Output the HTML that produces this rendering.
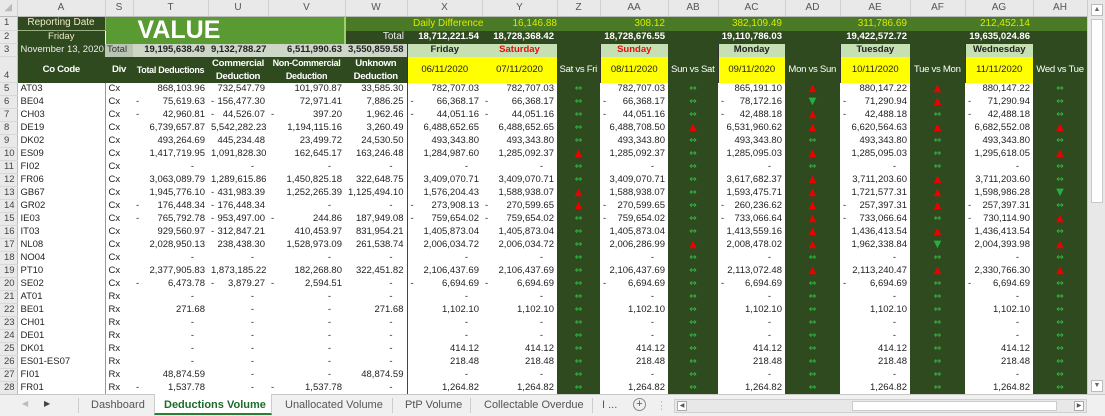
<!DOCTYPE html>
<html><head><meta charset="utf-8">
<style>
*{margin:0;padding:0;box-sizing:border-box}
body{width:1105px;height:416px;overflow:hidden;background:#fff;font-family:"Liberation Sans",sans-serif;position:relative}
table{position:absolute;left:0;top:0;border-collapse:collapse;table-layout:fixed;width:1087px}
td{font-size:9.5px;color:#222;white-space:nowrap;overflow:hidden;text-align:right;padding:0 3px;height:13px;line-height:12px}
tr.h td{height:16px;background:#e9e9e9;color:#555;text-align:center;font-size:10px;border-right:1px solid #d0d0d0;border-bottom:1px solid #bbb}
td.r{background:#e9e9e9;color:#444;text-align:left;padding-left:4px;border-right:1px solid #bbb;border-bottom:1px solid #d8d8d8;font-size:9.5px}
td.l{text-align:left}
td.sa{border-right:1px solid #999}
td.sw{border-right:1px solid #444}
td.g{background:#2f4a1e;color:#fff}
td.hd{font-size:9.6px;letter-spacing:-0.3px;padding:0 1px}
td.hs{font-size:9px}
td.a{background:#2f4a1e;text-align:center;font-family:"DejaVu Sans",sans-serif;font-size:10px;line-height:12px}
td.e{color:#35c24a;font-size:9px}
td.u{color:#ee0000}
td.d{color:#22b040}
td b{float:left;font-weight:normal;padding-left:0}
td.z{padding-right:14px}
.y{color:#d6ec00}
</style></head><body>
<table>
<colgroup><col style="width:17px"><col style="width:88px"><col style="width:28px"><col style="width:75px"><col style="width:60px"><col style="width:77px"><col style="width:62px"><col style="width:75px"><col style="width:75px"><col style="width:43px"><col style="width:68px"><col style="width:50px"><col style="width:67px"><col style="width:55px"><col style="width:70px"><col style="width:55px"><col style="width:68px"><col style="width:54px"></colgroup>
<tr class="h"><td style="color:#bbb">◢</td><td>A</td><td>S</td><td>T</td><td>U</td><td>V</td><td>W</td><td>X</td><td>Y</td><td>Z</td><td>AA</td><td>AB</td><td>AC</td><td>AD</td><td>AE</td><td>AF</td><td>AG</td><td>AH</td></tr>
<tr style="height:14px"><td class="r">1</td>
<td style="background:#2f4a1e;color:#eee8c8;text-align:center;border:1px solid #9ab080;font-size:10px">Reporting Date</td>
<td colspan="4" rowspan="2" style="background:#5a9a32;color:#fff;font-size:25px;font-weight:bold;text-align:left;padding-left:32px;line-height:26px;border-right:2px solid #9ed070">VALUE</td>
<td style="background:#4a7a25"></td>
<td colspan="11" style="background:#4a7a25;padding:0;position:relative"><div style="position:relative;height:14px;font-size:10px;color:#d6ec00;line-height:14px">
<span style="position:absolute;left:6px">Daily Difference</span>
<span style="position:absolute;right:530px">16,146.88</span>
<span style="position:absolute;right:422px">308.12</span>
<span style="position:absolute;right:305px">382,109.49</span>
<span style="position:absolute;right:180px">311,786.69</span>
<span style="position:absolute;right:57px">212,452.14</span></div></td></tr>
<tr style="height:13px"><td class="r">2</td><td class="g" style="text-align:center;color:#eee8c8">Friday</td>
<td class="g" style="font-size:10px;color:#eee">Total</td>
<td class="g" style="font-weight:bold">18,712,221.54</td><td class="g" style="font-weight:bold">18,728,368.42</td><td class="g"></td><td class="g" style="font-weight:bold">18,728,676.55</td><td class="g"></td><td class="g" style="font-weight:bold">19,110,786.03</td><td class="g"></td><td class="g" style="font-weight:bold">19,422,572.72</td><td class="g"></td><td class="g" style="font-weight:bold">19,635,024.86</td><td class="g"></td></tr>
<tr style="height:13px"><td class="r">3</td><td class="g" style="text-align:center;color:#eee">November 13, 2020</td>
<td style="background:#b9c4b3;text-align:left;color:#333;padding-left:2px">Total</td>
<td style="background:#cdd6c7;font-weight:bold">19,195,638.49</td><td style="background:#cdd6c7;font-weight:bold">9,132,788.27</td><td style="background:#cdd6c7;font-weight:bold">6,511,990.63</td><td style="background:#cdd6c7;font-weight:bold">3,550,859.58</td>
<td style="background:#c6e0b4;text-align:center;font-weight:bold;border-left:1px solid #333">Friday</td><td style="background:#c6e0b4;text-align:center;font-weight:bold;color:#e01010">Saturday</td><td class="g"></td>
<td style="background:#c6e0b4;text-align:center;font-weight:bold;color:#e01010;border-left:1px solid #333">Sunday</td><td class="g"></td>
<td style="background:#c6e0b4;text-align:center;font-weight:bold;border-left:1px solid #333">Monday</td><td class="g"></td>
<td style="background:#c6e0b4;text-align:center;font-weight:bold;border-left:1px solid #333">Tuesday</td><td class="g"></td>
<td style="background:#c6e0b4;text-align:center;font-weight:bold;border-left:1px solid #333">Wednesday</td><td class="g"></td></tr>
<tr style="height:26px"><td class="r" style="vertical-align:bottom">4</td>
<td class="g hd" style="text-align:center;font-weight:bold;height:26px">Co Code</td>
<td class="g hd" style="text-align:center;font-weight:bold">Div</td>
<td class="g hd hs" style="text-align:center;font-weight:bold">Total Deductions</td>
<td class="g hd" style="text-align:center;font-weight:bold;line-height:13px">Commercial<br>Deduction</td>
<td class="g hd hs" style="text-align:center;font-weight:bold;line-height:13px">Non-Commercial<br>Deduction</td>
<td class="g hd" style="text-align:center;font-weight:bold;line-height:13px">Unknown<br>Deduction</td>
<td style="background:#ffff00;text-align:center;border-left:1px solid #333">06/11/2020</td><td style="background:#ffff00;text-align:center">07/11/2020</td><td class="g y hd" style="text-align:center">Sat vs Fri</td>
<td style="background:#ffff00;text-align:center;border-left:1px solid #333">08/11/2020</td><td class="g y hd" style="text-align:center">Sun vs Sat</td>
<td style="background:#ffff00;text-align:center;border-left:1px solid #333">09/11/2020</td><td class="g y hd" style="text-align:center">Mon vs Sun</td>
<td style="background:#ffff00;text-align:center;border-left:1px solid #333">10/11/2020</td><td class="g y hd" style="text-align:center">Tue vs Mon</td>
<td style="background:#ffff00;text-align:center;border-left:1px solid #333">11/11/2020</td><td class="g y hd" style="text-align:center">Wed vs Tue</td></tr>

<tr><td class="r">5</td><td class="l sa">AT03</td><td class="l">Cx</td><td>868,103.96</td><td>732,547.79</td><td>101,970.87</td><td class="sw">33,585.30</td><td>782,707.03</td><td>782,707.03</td><td class="a e">⇔</td><td>782,707.03</td><td class="a e">⇔</td><td>865,191.10</td><td class="a u">▲</td><td>880,147.22</td><td class="a u">▲</td><td>880,147.22</td><td class="a e">⇔</td></tr>
<tr><td class="r">6</td><td class="l sa">BE04</td><td class="l">Cx</td><td><b>-</b>75,619.63</td><td><b>-</b>156,477.30</td><td>72,971.41</td><td class="sw">7,886.25</td><td><b>-</b>66,368.17</td><td><b>-</b>66,368.17</td><td class="a e">⇔</td><td><b>-</b>66,368.17</td><td class="a e">⇔</td><td><b>-</b>78,172.16</td><td class="a d">▼</td><td><b>-</b>71,290.94</td><td class="a u">▲</td><td><b>-</b>71,290.94</td><td class="a e">⇔</td></tr>
<tr><td class="r">7</td><td class="l sa">CH03</td><td class="l">Cx</td><td><b>-</b>42,960.81</td><td><b>-</b>44,526.07</td><td><b>-</b>397.20</td><td class="sw">1,962.46</td><td><b>-</b>44,051.16</td><td><b>-</b>44,051.16</td><td class="a e">⇔</td><td><b>-</b>44,051.16</td><td class="a e">⇔</td><td><b>-</b>42,488.18</td><td class="a u">▲</td><td><b>-</b>42,488.18</td><td class="a e">⇔</td><td><b>-</b>42,488.18</td><td class="a e">⇔</td></tr>
<tr><td class="r">8</td><td class="l sa">DE19</td><td class="l">Cx</td><td>6,739,657.87</td><td>5,542,282.23</td><td>1,194,115.16</td><td class="sw">3,260.49</td><td>6,488,652.65</td><td>6,488,652.65</td><td class="a e">⇔</td><td>6,488,708.50</td><td class="a u">▲</td><td>6,531,960.62</td><td class="a u">▲</td><td>6,620,564.63</td><td class="a u">▲</td><td>6,682,552.08</td><td class="a u">▲</td></tr>
<tr><td class="r">9</td><td class="l sa">DK02</td><td class="l">Cx</td><td>493,264.69</td><td>445,234.48</td><td>23,499.72</td><td class="sw">24,530.50</td><td>493,343.80</td><td>493,343.80</td><td class="a e">⇔</td><td>493,343.80</td><td class="a e">⇔</td><td>493,343.80</td><td class="a e">⇔</td><td>493,343.80</td><td class="a e">⇔</td><td>493,343.80</td><td class="a e">⇔</td></tr>
<tr><td class="r">10</td><td class="l sa">ES09</td><td class="l">Cx</td><td>1,417,719.95</td><td>1,091,828.30</td><td>162,645.17</td><td class="sw">163,246.48</td><td>1,284,987.60</td><td>1,285,092.37</td><td class="a u">▲</td><td>1,285,092.37</td><td class="a e">⇔</td><td>1,285,095.03</td><td class="a u">▲</td><td>1,285,095.03</td><td class="a e">⇔</td><td>1,295,618.05</td><td class="a u">▲</td></tr>
<tr><td class="r">11</td><td class="l sa">FI02</td><td class="l">Cx</td><td class="z">-</td><td class="z">-</td><td class="z">-</td><td class="z sw">-</td><td class="z">-</td><td class="z">-</td><td class="a e">⇔</td><td class="z">-</td><td class="a e">⇔</td><td class="z">-</td><td class="a e">⇔</td><td class="z">-</td><td class="a e">⇔</td><td class="z">-</td><td class="a e">⇔</td></tr>
<tr><td class="r">12</td><td class="l sa">FR06</td><td class="l">Cx</td><td>3,063,089.79</td><td>1,289,615.86</td><td>1,450,825.18</td><td class="sw">322,648.75</td><td>3,409,070.71</td><td>3,409,070.71</td><td class="a e">⇔</td><td>3,409,070.71</td><td class="a e">⇔</td><td>3,617,682.37</td><td class="a u">▲</td><td>3,711,203.60</td><td class="a u">▲</td><td>3,711,203.60</td><td class="a e">⇔</td></tr>
<tr><td class="r">13</td><td class="l sa">GB67</td><td class="l">Cx</td><td>1,945,776.10</td><td><b>-</b>431,983.39</td><td>1,252,265.39</td><td class="sw">1,125,494.10</td><td>1,576,204.43</td><td>1,588,938.07</td><td class="a u">▲</td><td>1,588,938.07</td><td class="a e">⇔</td><td>1,593,475.71</td><td class="a u">▲</td><td>1,721,577.31</td><td class="a u">▲</td><td>1,598,986.28</td><td class="a d">▼</td></tr>
<tr><td class="r">14</td><td class="l sa">GR02</td><td class="l">Cx</td><td><b>-</b>176,448.34</td><td><b>-</b>176,448.34</td><td class="z">-</td><td class="z sw">-</td><td><b>-</b>273,908.13</td><td><b>-</b>270,599.65</td><td class="a u">▲</td><td><b>-</b>270,599.65</td><td class="a e">⇔</td><td><b>-</b>260,236.62</td><td class="a u">▲</td><td><b>-</b>257,397.31</td><td class="a u">▲</td><td><b>-</b>257,397.31</td><td class="a e">⇔</td></tr>
<tr><td class="r">15</td><td class="l sa">IE03</td><td class="l">Cx</td><td><b>-</b>765,792.78</td><td><b>-</b>953,497.00</td><td><b>-</b>244.86</td><td class="sw">187,949.08</td><td><b>-</b>759,654.02</td><td><b>-</b>759,654.02</td><td class="a e">⇔</td><td><b>-</b>759,654.02</td><td class="a e">⇔</td><td><b>-</b>733,066.64</td><td class="a u">▲</td><td><b>-</b>733,066.64</td><td class="a e">⇔</td><td><b>-</b>730,114.90</td><td class="a u">▲</td></tr>
<tr><td class="r">16</td><td class="l sa">IT03</td><td class="l">Cx</td><td>929,560.97</td><td><b>-</b>312,847.21</td><td>410,453.97</td><td class="sw">831,954.21</td><td>1,405,873.04</td><td>1,405,873.04</td><td class="a e">⇔</td><td>1,405,873.04</td><td class="a e">⇔</td><td>1,413,559.16</td><td class="a u">▲</td><td>1,436,413.54</td><td class="a u">▲</td><td>1,436,413.54</td><td class="a e">⇔</td></tr>
<tr><td class="r">17</td><td class="l sa">NL08</td><td class="l">Cx</td><td>2,028,950.13</td><td>238,438.30</td><td>1,528,973.09</td><td class="sw">261,538.74</td><td>2,006,034.72</td><td>2,006,034.72</td><td class="a e">⇔</td><td>2,006,286.99</td><td class="a u">▲</td><td>2,008,478.02</td><td class="a u">▲</td><td>1,962,338.84</td><td class="a d">▼</td><td>2,004,393.98</td><td class="a u">▲</td></tr>
<tr><td class="r">18</td><td class="l sa">NO04</td><td class="l">Cx</td><td class="z">-</td><td class="z">-</td><td class="z">-</td><td class="z sw">-</td><td class="z">-</td><td class="z">-</td><td class="a e">⇔</td><td class="z">-</td><td class="a e">⇔</td><td class="z">-</td><td class="a e">⇔</td><td class="z">-</td><td class="a e">⇔</td><td class="z">-</td><td class="a e">⇔</td></tr>
<tr><td class="r">19</td><td class="l sa">PT10</td><td class="l">Cx</td><td>2,377,905.83</td><td>1,873,185.22</td><td>182,268.80</td><td class="sw">322,451.82</td><td>2,106,437.69</td><td>2,106,437.69</td><td class="a e">⇔</td><td>2,106,437.69</td><td class="a e">⇔</td><td>2,113,072.48</td><td class="a u">▲</td><td>2,113,240.47</td><td class="a u">▲</td><td>2,330,766.30</td><td class="a u">▲</td></tr>
<tr><td class="r">20</td><td class="l sa">SE02</td><td class="l">Cx</td><td><b>-</b>6,473.78</td><td><b>-</b>3,879.27</td><td><b>-</b>2,594.51</td><td class="z sw">-</td><td><b>-</b>6,694.69</td><td><b>-</b>6,694.69</td><td class="a e">⇔</td><td><b>-</b>6,694.69</td><td class="a e">⇔</td><td><b>-</b>6,694.69</td><td class="a e">⇔</td><td><b>-</b>6,694.69</td><td class="a e">⇔</td><td><b>-</b>6,694.69</td><td class="a e">⇔</td></tr>
<tr><td class="r">21</td><td class="l sa">AT01</td><td class="l">Rx</td><td class="z">-</td><td class="z">-</td><td class="z">-</td><td class="z sw">-</td><td class="z">-</td><td class="z">-</td><td class="a e">⇔</td><td class="z">-</td><td class="a e">⇔</td><td class="z">-</td><td class="a e">⇔</td><td class="z">-</td><td class="a e">⇔</td><td class="z">-</td><td class="a e">⇔</td></tr>
<tr><td class="r">22</td><td class="l sa">BE01</td><td class="l">Rx</td><td>271.68</td><td class="z">-</td><td class="z">-</td><td class="sw">271.68</td><td>1,102.10</td><td>1,102.10</td><td class="a e">⇔</td><td>1,102.10</td><td class="a e">⇔</td><td>1,102.10</td><td class="a e">⇔</td><td>1,102.10</td><td class="a e">⇔</td><td>1,102.10</td><td class="a e">⇔</td></tr>
<tr><td class="r">23</td><td class="l sa">CH01</td><td class="l">Rx</td><td class="z">-</td><td class="z">-</td><td class="z">-</td><td class="z sw">-</td><td class="z">-</td><td class="z">-</td><td class="a e">⇔</td><td class="z">-</td><td class="a e">⇔</td><td class="z">-</td><td class="a e">⇔</td><td class="z">-</td><td class="a e">⇔</td><td class="z">-</td><td class="a e">⇔</td></tr>
<tr><td class="r">24</td><td class="l sa">DE01</td><td class="l">Rx</td><td class="z">-</td><td class="z">-</td><td class="z">-</td><td class="z sw">-</td><td class="z">-</td><td class="z">-</td><td class="a e">⇔</td><td class="z">-</td><td class="a e">⇔</td><td class="z">-</td><td class="a e">⇔</td><td class="z">-</td><td class="a e">⇔</td><td class="z">-</td><td class="a e">⇔</td></tr>
<tr><td class="r">25</td><td class="l sa">DK01</td><td class="l">Rx</td><td class="z">-</td><td class="z">-</td><td class="z">-</td><td class="z sw">-</td><td>414.12</td><td>414.12</td><td class="a e">⇔</td><td>414.12</td><td class="a e">⇔</td><td>414.12</td><td class="a e">⇔</td><td>414.12</td><td class="a e">⇔</td><td>414.12</td><td class="a e">⇔</td></tr>
<tr><td class="r">26</td><td class="l sa">ES01-ES07</td><td class="l">Rx</td><td class="z">-</td><td class="z">-</td><td class="z">-</td><td class="z sw">-</td><td>218.48</td><td>218.48</td><td class="a e">⇔</td><td>218.48</td><td class="a e">⇔</td><td>218.48</td><td class="a e">⇔</td><td>218.48</td><td class="a e">⇔</td><td>218.48</td><td class="a e">⇔</td></tr>
<tr><td class="r">27</td><td class="l sa">FI01</td><td class="l">Rx</td><td>48,874.59</td><td class="z">-</td><td class="z">-</td><td class="sw">48,874.59</td><td class="z">-</td><td class="z">-</td><td class="a e">⇔</td><td class="z">-</td><td class="a e">⇔</td><td class="z">-</td><td class="a e">⇔</td><td class="z">-</td><td class="a e">⇔</td><td class="z">-</td><td class="a e">⇔</td></tr>
<tr><td class="r">28</td><td class="l sa">FR01</td><td class="l">Rx</td><td><b>-</b>1,537.78</td><td class="z">-</td><td><b>-</b>1,537.78</td><td class="z sw">-</td><td>1,264.82</td><td>1,264.82</td><td class="a e">⇔</td><td>1,264.82</td><td class="a e">⇔</td><td>1,264.82</td><td class="a e">⇔</td><td>1,264.82</td><td class="a e">⇔</td><td>1,264.82</td><td class="a e">⇔</td></tr>
</table>

<div style="position:absolute;left:1087px;top:0;width:18px;height:394px;background:#e8e8e8;border-left:1px solid #ccc">
<div style="position:absolute;left:3px;top:4px;width:12px;height:12px;border:1px solid #bbb;background:#fff;font-size:7px;color:#666;text-align:center;line-height:10px">▲</div>
<div style="position:absolute;left:3px;top:19px;width:12px;height:184px;border:1px solid #c8c8c8;background:#fff"></div>
<div style="position:absolute;left:3px;top:380px;width:12px;height:12px;border:1px solid #bbb;background:#fff;font-size:7px;color:#666;text-align:center;line-height:10px">▼</div>
</div>

<div style="position:absolute;left:0;top:394px;width:1105px;height:22px;background:#f0f0f0;border-top:1px solid #c8c8c8;font-size:11px;color:#555">
<span style="position:absolute;left:22px;top:4px;color:#bbb;font-size:8px">◀</span>
<span style="position:absolute;left:44px;top:4px;color:#444;font-size:8px">▶</span>
<span style="position:absolute;left:78px;top:3px;height:15px;border-left:1px solid #ccc"></span>
<span style="position:absolute;left:91px;top:4px">Dashboard</span>
<div style="position:absolute;left:154px;top:-1px;width:118px;height:21px;background:#fff;border-bottom:2px solid #2e7d32;border-left:1px solid #ccc;border-right:1px solid #ccc"></div>
<span style="position:absolute;left:164px;top:4px;color:#1e6b2a;font-weight:bold">Deductions Volume</span>
<span style="position:absolute;left:285px;top:4px">Unallocated Volume</span>
<span style="position:absolute;left:392px;top:3px;height:15px;border-left:1px solid #ccc"></span>
<span style="position:absolute;left:405px;top:4px">PtP Volume</span>
<span style="position:absolute;left:470px;top:3px;height:15px;border-left:1px solid #ccc"></span>
<span style="position:absolute;left:484px;top:4px">Collectable Overdue</span>
<span style="position:absolute;left:592px;top:3px;height:15px;border-left:1px solid #ccc"></span>
<span style="position:absolute;left:602px;top:4px">I ...</span>
<span style="position:absolute;left:633px;top:3px;width:13px;height:13px;border:1px solid #888;border-radius:50%;text-align:center;line-height:11px;font-size:11px;color:#555">+</span>
<span style="position:absolute;left:656px;top:4px;color:#bbb">⋮</span>
<div style="position:absolute;left:674px;top:4px;width:413px;height:14px;background:#e8e8e8;border:1px solid #d0d0d0">
<div style="position:absolute;left:2px;top:1px;width:10px;height:10px;border:1px solid #aaa;background:#fff;font-size:6px;line-height:8px;text-align:center">◀</div>
<div style="position:absolute;left:177px;top:1px;width:205px;height:10px;background:#fff;border:1px solid #ccc"></div>
<div style="position:absolute;right:2px;top:1px;width:10px;height:10px;border:1px solid #aaa;background:#fff;font-size:6px;line-height:8px;text-align:center">▶</div>
</div>
</div>
</body></html>
